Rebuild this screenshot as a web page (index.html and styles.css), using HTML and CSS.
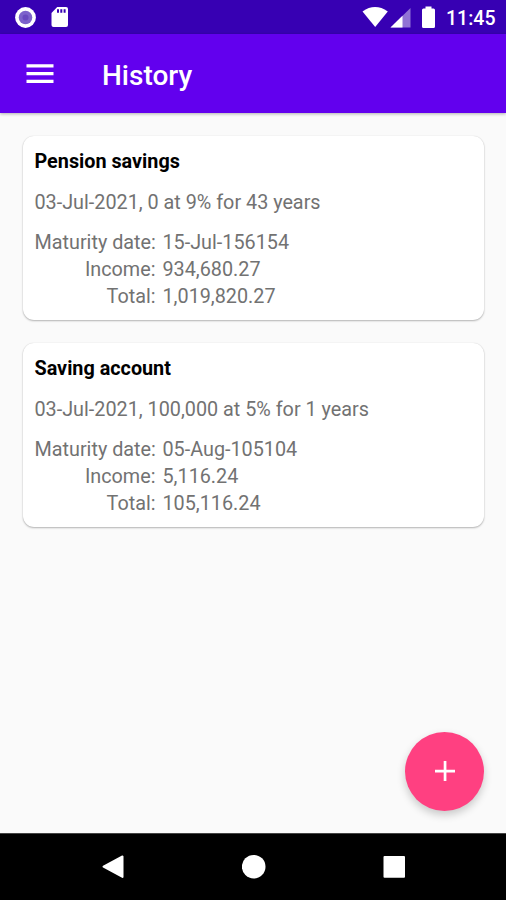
FILE: index.html
```
<!doctype html>
<html lang="en">
    <head>
        <meta charset="utf-8">
        <meta name="viewport" content="width=device-width, initial-scale=1">
        <title>History</title>
        <link rel="stylesheet" href="styles.css">
    </head>
    <body>
        <div class="status">
            <svg class="record" width="21" height="21" viewBox="0 0 21 21">
                <circle cx="10.500" cy="10.500" r="10.400" fill="#fff"/>
                <circle cx="10.500" cy="10.500" r="6.800" fill="#7c62cb"/>
                <circle cx="10.500" cy="10.500" r="3" fill="#6849bf"/>
            </svg>
            <svg class="sd" width="18" height="22" viewBox="0 0 18 22">
                <path fill="#fff" d="M6.200 1H15q2 0 2 2v16q0 2-2 2H2.500q-2 0-2-2V7z"/>
                <path fill="#3700b3" d="M6 3.300h2v3.500H6zM9.300 3.300h2v3.500h-2zM12.600 3.300h2v3.500h-2z"/>
            </svg>
            <svg class="signals" width="76" height="34" viewBox="0 0 76 34">
                <path fill="#fff" d="M.5 11.400Q13 2.500 25.800 11.400L13.200 27z"/>
                <path fill="#fff" fill-opacity=".45" d="M48.500 8V27.500H28.500z"/>
                <path fill="#fff" d="M40.500 15.800V27.500H28.500z"/>
                <path fill="#fff" d="M63.500 6.500h6v2h2q1.500 0 1.500 1.500v16.500q0 1.500-1.500 1.500h-10q-1.500 0-1.500-1.500V10q0-1.500 1.500-1.500h2z"/>
            </svg>
            <span class="clock">11:45</span>
        </div>

        <header class="toolbar">
            <svg class="menu" width="28" height="20" viewBox="0 0 28 20">
                <path fill="#fff" d="M.5.200h27v3.200H.5zM.5 8h27v3.200H.5zM.5 15.800h27V19H.5z"/>
            </svg>
            <h1>History</h1>
        </header>

        <main class="list">
            <div class="card">
                <h2>Pension savings</h2>
                <p>03-Jul-2021, 0 at 9% for 43 years</p>
                <dl>
                    <dt>Maturity date:</dt><dd>15-Jul-156154</dd>
                    <dt>Income:</dt><dd>934,680.27</dd>
                    <dt>Total:</dt><dd>1,019,820.27</dd>
                </dl>
            </div>
            <div class="card">
                <h2>Saving account</h2>
                <p>03-Jul-2021, 100,000 at 5% for 1 years</p>
                <dl>
                    <dt>Maturity date:</dt><dd>05-Aug-105104</dd>
                    <dt>Income:</dt><dd>5,116.24</dd>
                    <dt>Total:</dt><dd>105,116.24</dd>
                </dl>
            </div>
            <button class="fab" aria-label="Add">
                <svg width="20" height="20" viewBox="0 0 20 20">
                    <path fill="#fff" d="M8.700 0h2.700v8.700H20v2.700h-8.600V20H8.700v-8.600H0V8.700h8.700z"/>
                </svg>
            </button>
        </main>

        <nav class="navbar">
            <svg width="24" height="26" viewBox="0 0 24 26"><path fill="#fff" stroke="#fff" stroke-width="2" stroke-linejoin="round" d="M21.500 2.500v20.400L2.500 12.700z"/></svg>
            <svg width="24" height="26" viewBox="0 0 24 26"><circle cx="11.700" cy="12.700" r="11.800" fill="#fff"/></svg>
            <svg width="24" height="26" viewBox="0 0 24 26"><rect x="1.500" y="2" width="21.500" height="21.700" rx="1" fill="#fff"/></svg>
        </nav>
    </body>
</html>
```
FILE: styles.css
```
* {
    box-sizing: border-box;
}
body {
    display: flex;
    flex-direction: column;
    height: 100vh;
    margin: 0;
    overflow: hidden;
    background: #fafafa;
    color: #727272;
    font-family: Roboto, sans-serif;
    font-size: 19.8px;
}
h1, h2, p, dl, dd {
    margin: 0;
}
svg {
    display: block;
    flex: none;
}

/* status bar */
.status {
    display: flex;
    flex: none;
    align-items: center;
    height: 34px;
    padding: 0 10px 0 15px;
    background: #3700b3;
}
.sd {
    margin-left: 15px;
}
.signals {
    margin-left: auto;
}
.clock {
    width: 50px;
    margin-left: 8px;
    padding-top: 2px;
    color: #fff;
    font-size: 19.5px;
    font-weight: 500;
    white-space: nowrap;
}

.toolbar {
    display: flex;
    flex: none;
    align-items: center;
    height: 79px;
    padding-left: 26px;
    background: #6200ee;
    box-shadow: 0 1px 3px rgba(0, 0, 0, .3);
}
.toolbar h1 {
    margin-left: 48px;
    padding-top: 3px;
    color: #fff;
    font-size: 28px;
    font-weight: 500;
}

.list {
    position: relative;
    flex: 1;
    padding: 22.5px 22px 0 23px;
}
.card {
    height: 184.5px;
    margin-bottom: 22.5px;
    padding: 12.5px 11.5px;
    border-radius: 11px;
    background: #fff;
    box-shadow: 0 1px 2px rgba(0, 0, 0, .28), 0 0 1px rgba(0, 0, 0, .15);
}
.card h2 {
    color: #000;
    font-size: 19.8px;
    font-weight: 700;
    line-height: 27px;
}
.card p {
    margin: 14px 0;
    line-height: 27px;
}
.card dl {
    display: grid;
    grid-template-columns: 121px auto;
    column-gap: 7px;
    line-height: 26.8px;
}
.card dt {
    text-align: right;
    white-space: nowrap;
}

/* add button floats over the list */
.fab {
    position: absolute;
    right: 22px;
    bottom: 22.5px;
    display: flex;
    align-items: center;
    justify-content: center;
    width: 79px;
    height: 79px;
    padding: 0;
    border: none;
    border-radius: 50%;
    background: #ff4081;
    box-shadow: 0 4px 9px rgba(0, 0, 0, .2);
}

.navbar {
    display: flex;
    flex: none;
    align-items: center;
    justify-content: space-between;
    height: 67px;
    padding: 0 100px 0 101px;
    border-top: 1px solid #444;
    background: #000;
}
```
